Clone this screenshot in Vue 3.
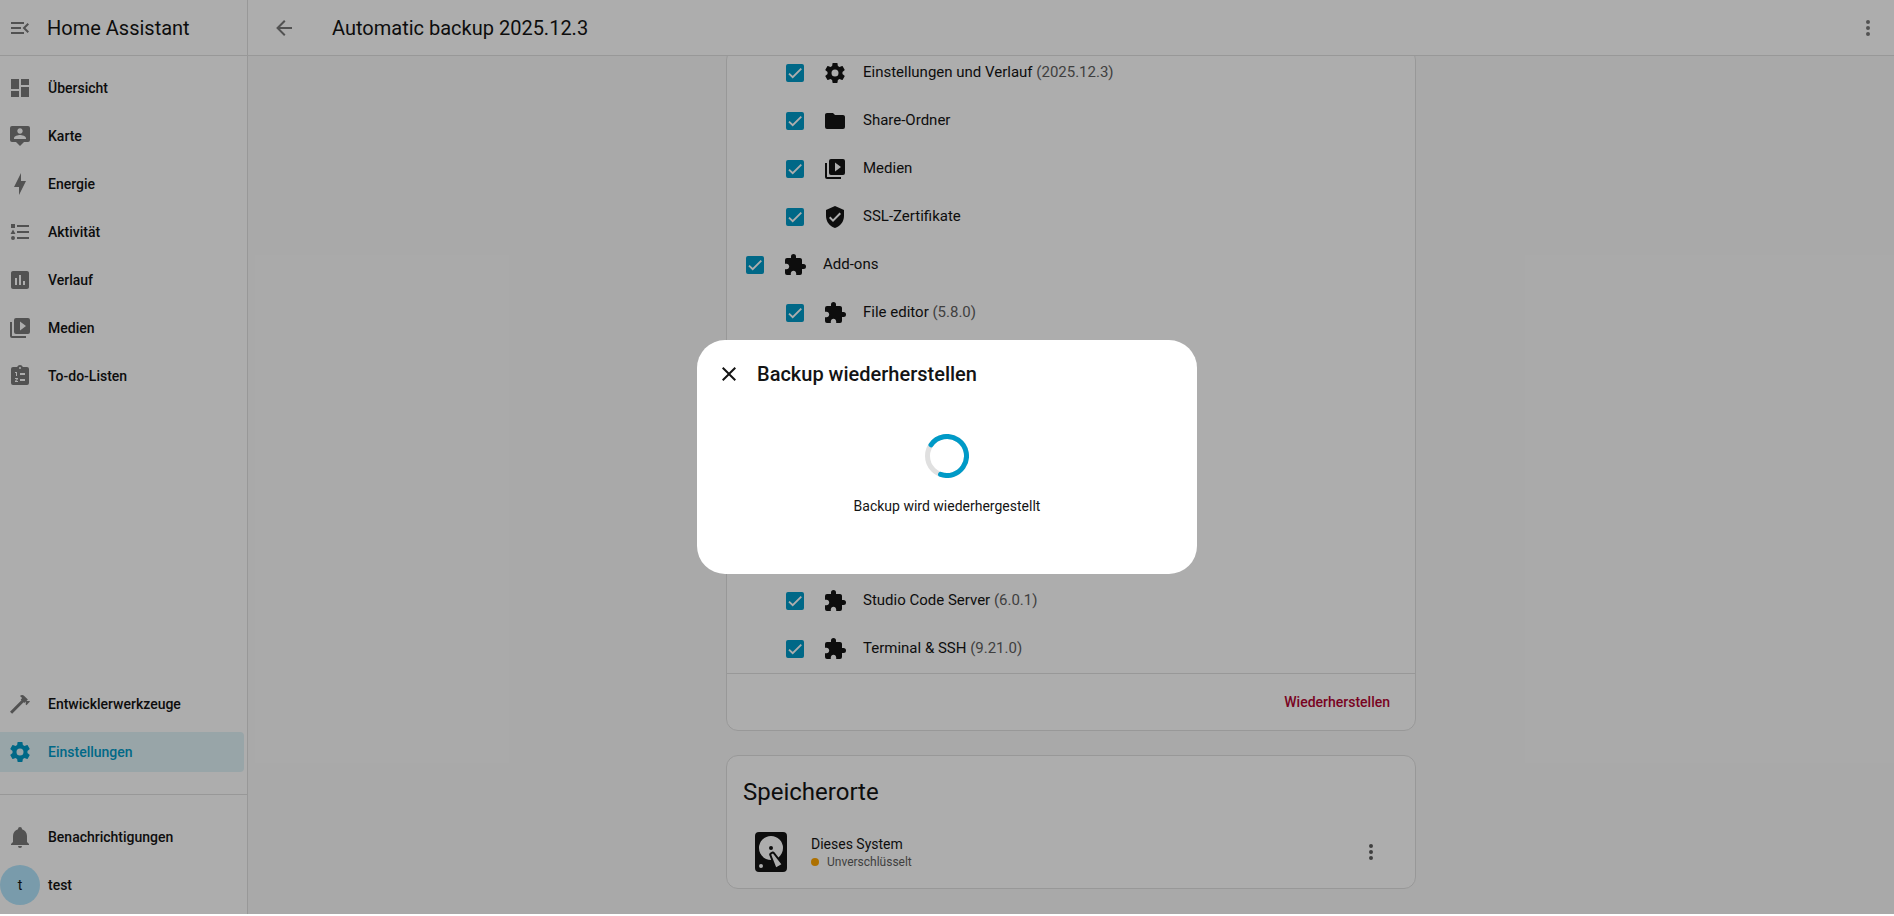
<script setup>
import { ref } from 'vue'

const icons = {
  menuOpen: 'M21,15.61L19.59,17L14.58,12L19.59,7L21,8.39L17.44,12L21,15.61M3,6H16V8H3V6M3,13V11H13V13H3M3,18V16H16V18H3Z',
  arrowLeft: 'M20,11V13H8L13.5,18.5L12.08,19.92L4.16,12L12.08,4.08L13.5,5.5L8,11H20Z',
  dots: 'M12,16A2,2 0 0,1 14,18A2,2 0 0,1 12,20A2,2 0 0,1 10,18A2,2 0 0,1 12,16M12,10A2,2 0 0,1 14,12A2,2 0 0,1 12,14A2,2 0 0,1 10,12A2,2 0 0,1 12,10M12,4A2,2 0 0,1 14,6A2,2 0 0,1 12,8A2,2 0 0,1 10,6A2,2 0 0,1 12,4Z',
  close: 'M19,6.41L17.59,5L12,10.59L6.41,5L5,6.41L10.59,12L5,17.59L6.41,19L12,13.41L17.59,19L19,17.59L13.41,12L19,6.41Z',
  dashboard: 'M13,3V9H21V3M13,21H21V11H13M3,21H11V15H3M3,13H11V3H3V13Z',
  map: 'M20,2H4A2,2 0 0,0 2,4V16A2,2 0 0,0 4,18H8L12,22L16,18H20A2,2 0 0,0 22,16V4A2,2 0 0,0 20,2M12,4.3C13.5,4.3 14.7,5.5 14.7,7C14.7,8.5 13.5,9.7 12,9.7C10.5,9.7 9.3,8.5 9.3,7C9.3,5.5 10.5,4.3 12,4.3M18,15H6V14.1C6,12.1 10,11 12,11C14,11 18,12.1 18,14.1V15Z',
  bolt: 'M11 15H6L13 1V9H18L11 23V15Z',
  activity: 'M5,9.5L7.5,14H2.5L5,9.5M3,4H7V8H3V4M5,20A2,2 0 0,0 7,18A2,2 0 0,0 5,16A2,2 0 0,0 3,18A2,2 0 0,0 5,20M9,5V7H21V5H9M9,19H21V17H9V19M9,13H21V11H9V13Z',
  chart: 'M9 17H7V10H9V17M13 17H11V7H13V17M17 17H15V13H17V17M19 3H5C3.9 3 3 3.9 3 5V19C3 20.1 3.9 21 5 21H19C20.1 21 21 20.1 21 19V5C21 3.9 20.1 3 19 3Z',
  media: 'M4,6H2V20A2,2 0 0,0 4,22H18V20H4V6M20,2H8A2,2 0 0,0 6,4V16A2,2 0 0,0 8,18H20A2,2 0 0,0 22,16V4A2,2 0 0,0 20,2M12,14.5V5.5L18,10L12,14.5Z',
  todo: 'M19 3H14.82C14.4 1.84 13.3 1 12 1S9.6 1.84 9.18 3H5A2 2 0 0 0 3 5V19A2 2 0 0 0 5 21H19A2 2 0 0 0 21 19V5A2 2 0 0 0 19 3M12 3A1 1 0 1 1 12 5A1 1 0 0 1 12 3M7 8H9V12H8V9H7V8M7 14H10V15.1L8.2 17H10V18H7V16.9L8.9 15H7V14M12 9H17V11H12V9M12 15H17V17H12V15Z',
  hammer: 'M2,19.63L13.43,8.2L12.72,7.5L14.14,6.07L12,3.89C13.2,2.7 15.09,2.7 16.27,3.89L19.87,7.5L18.45,8.91H21.29L22,9.62L18.45,13.21L17.74,12.5V9.62L16.27,11.04L15.56,10.33L4.13,21.76L2,19.63Z',
  cog: 'M12,15.5A3.5,3.5 0 0,1 8.5,12A3.5,3.5 0 0,1 12,8.5A3.5,3.5 0 0,1 15.5,12A3.5,3.5 0 0,1 12,15.5M19.43,12.97C19.47,12.65 19.5,12.33 19.5,12C19.5,11.67 19.47,11.34 19.43,11L21.54,9.37C21.73,9.22 21.78,8.95 21.66,8.73L19.66,5.27C19.54,5.05 19.27,4.96 19.05,5.05L16.56,6.05C16.04,5.66 15.5,5.32 14.87,5.07L14.5,2.42C14.46,2.18 14.25,2 14,2H10C9.75,2 9.54,2.18 9.5,2.42L9.13,5.07C8.5,5.32 7.96,5.66 7.44,6.05L4.95,5.05C4.73,4.96 4.46,5.05 4.34,5.27L2.34,8.73C2.21,8.95 2.27,9.22 2.46,9.37L4.57,11C4.53,11.34 4.5,11.67 4.5,12C4.5,12.33 4.53,12.65 4.57,12.97L2.46,14.63C2.27,14.78 2.21,15.05 2.34,15.27L4.34,18.73C4.46,18.95 4.73,19.03 4.95,18.95L7.44,17.94C7.96,18.34 8.5,18.68 9.13,18.93L9.5,21.58C9.54,21.82 9.75,22 10,22H14C14.25,22 14.46,21.82 14.5,21.58L14.87,18.93C15.5,18.67 16.04,18.34 16.56,17.94L19.05,18.95C19.27,19.03 19.54,18.95 19.66,18.73L21.66,15.27C21.78,15.05 21.73,14.78 21.54,14.63L19.43,12.97Z',
  bell: 'M21,19V20H3V19L5,17V11C5,7.9 7.03,5.17 10,4.29C10,4.19 10,4.1 10,4A2,2 0 0,1 12,2A2,2 0 0,1 14,4C14,4.1 14,4.19 14,4.29C16.97,5.17 19,7.9 19,11V17L21,19M14,21A2,2 0 0,1 12,23A2,2 0 0,1 10,21',
  folder: 'M10,4H4C2.89,4 2,4.89 2,6V18A2,2 0 0,0 4,20H20A2,2 0 0,0 22,18V8C22,6.89 21.1,6 20,6H12L10,4Z',
  shield: 'M10,17L6,13L7.41,11.59L10,14.17L16.59,7.58L18,9M12,1L3,5V11C3,16.55 6.84,21.74 12,23C17.16,21.74 21,16.55 21,11V5L12,1Z',
  puzzle: 'M20.5,11H19V7C19,5.89 18.1,5 17,5H13V3.5A2.5,2.5 0 0,0 10.5,1A2.5,2.5 0 0,0 8,3.5V5H4A2,2 0 0,0 2,7V10.8H3.5C5,10.8 6.2,12 6.2,13.5C6.2,15 5,16.2 3.5,16.2H2V20A2,2 0 0,0 4,22H7.8V20.5C7.8,19 9,17.8 10.5,17.8C12,17.8 13.2,19 13.2,20.5V22H17A2,2 0 0,0 19,20V16H20.5A2.5,2.5 0 0,0 23,13.5A2.5,2.5 0 0,0 20.5,11Z',
  disk: 'M6,2H18A2,2 0 0,1 20,4V20A2,2 0 0,1 18,22H6A2,2 0 0,1 4,20V4A2,2 0 0,1 6,2M12,4A6,6 0 0,0 6,10C6,13.31 8.69,16 12.1,16L11.22,13.77C10.95,13.29 11.11,12.68 11.59,12.4L12.45,11.9C12.93,11.63 13.54,11.79 13.82,12.27L15.74,14.69C17.12,13.59 18,11.9 18,10A6,6 0 0,0 12,4M12,9A1,1 0 0,1 13,10A1,1 0 0,1 12,11A1,1 0 0,1 11,10A1,1 0 0,1 12,9M7,18A1,1 0 0,0 6,19A1,1 0 0,0 7,20A1,1 0 0,0 8,19A1,1 0 0,0 7,18M12.09,13.27L14.58,19.58L17.17,18.08L12.95,12.77L12.09,13.27Z',
}

const mainNav = [
  { icon: 'dashboard', label: 'Übersicht' },
  { icon: 'map', label: 'Karte' },
  { icon: 'bolt', label: 'Energie' },
  { icon: 'activity', label: 'Aktivität' },
  { icon: 'chart', label: 'Verlauf' },
  { icon: 'media', label: 'Medien' },
  { icon: 'todo', label: 'To-do-Listen' },
]
const toolNav = [
  { icon: 'hammer', label: 'Entwicklerwerkzeuge' },
  { icon: 'cog', label: 'Einstellungen', active: true },
]

const upperItems = ref([
  { icon: 'cog', label: 'Einstellungen und Verlauf', version: '(2025.12.3)', child: true, checked: true },
  { icon: 'folder', label: 'Share-Ordner', child: true, checked: true },
  { icon: 'media', label: 'Medien', child: true, checked: true },
  { icon: 'shield', label: 'SSL-Zertifikate', child: true, checked: true },
  { icon: 'puzzle', label: 'Add-ons', child: false, checked: true },
  { icon: 'puzzle', label: 'File editor', version: '(5.8.0)', child: true, checked: true },
])
const lowerItems = ref([
  { icon: 'puzzle', label: 'Studio Code Server', version: '(6.0.1)', child: true, checked: true },
  { icon: 'puzzle', label: 'Terminal & SSH', version: '(9.21.0)', child: true, checked: true },
])
const groups = [
  { name: 'upper', items: upperItems.value },
  { name: 'lower', items: lowerItems.value },
]
</script>

<template>
  <div class="app">
    <aside class="sidebar">
      <div class="brand">
        <button class="icon-button" type="button" aria-label="Seitenleiste umschalten">
          <svg class="icon" viewBox="0 0 24 24"><path :d="icons.menuOpen" /></svg>
        </button>
        <span class="brand-name">Home Assistant</span>
      </div>
      <nav class="nav">
        <a v-for="item in mainNav" :key="item.label" class="nav-item" href="#">
          <svg class="icon" viewBox="0 0 24 24"><path :d="icons[item.icon]" /></svg>
          <span>{{ item.label }}</span>
        </a>
        <div class="nav-space"></div>
        <a v-for="item in toolNav" :key="item.label" class="nav-item" :class="{ active: item.active }" href="#">
          <svg class="icon" viewBox="0 0 24 24"><path :d="icons[item.icon]" /></svg>
          <span>{{ item.label }}</span>
        </a>
      </nav>
      <div class="account">
        <a class="nav-item" href="#">
          <svg class="icon" viewBox="0 0 24 24"><path :d="icons.bell" /></svg>
          <span>Benachrichtigungen</span>
        </a>
        <a class="nav-item user" href="#">
          <span class="avatar">t</span>
          <span>test</span>
        </a>
      </div>
    </aside>

    <main class="page">
      <header class="toolbar">
        <button class="icon-button" type="button" aria-label="Zurück">
          <svg class="icon" viewBox="0 0 24 24"><path :d="icons.arrowLeft" /></svg>
        </button>
        <h1 class="page-title">Automatic backup 2025.12.3</h1>
        <button class="icon-button" type="button" aria-label="Menü">
          <svg class="icon" viewBox="0 0 24 24"><path :d="icons.dots" /></svg>
        </button>
      </header>

      <div class="content">
        <section class="card data-card">
          <div v-for="group in groups" :key="group.name" class="group">
            <label v-for="item in group.items" :key="item.label" class="row" :class="{ child: item.child }">
              <span class="check">
                <input v-model="item.checked" type="checkbox" />
                <svg v-if="item.checked" class="mark" viewBox="0 0 24 24">
                  <path d="M1.73,12.91 8.1,19.28 22.79,4.59" />
                </svg>
              </span>
              <span class="row-icon">
                <svg class="icon" viewBox="0 0 24 24"><path :d="icons[item.icon]" /></svg>
              </span>
              <span class="row-label">{{ item.label }} <span v-if="item.version" class="version">{{ item.version }}</span></span>
            </label>
          </div>
          <div class="actions">
            <button class="restore" type="button">Wiederherstellen</button>
          </div>
        </section>

        <section class="card">
          <h2 class="card-title">Speicherorte</h2>
          <div class="location">
            <svg class="disk" viewBox="0 0 24 24"><path :d="icons.disk" /></svg>
            <div class="location-text">
              <span class="location-name">Dieses System</span>
              <span class="location-state"><span class="dot"></span>Unverschlüsselt</span>
            </div>
            <button class="icon-button dark" type="button" aria-label="Weitere Optionen">
              <svg class="icon" viewBox="0 0 24 24"><path :d="icons.dots" /></svg>
            </button>
          </div>
        </section>
      </div>
    </main>

    <div class="scrim">
      <div class="dialog" role="dialog" aria-modal="true" aria-labelledby="dialog-title">
        <header class="dialog-header">
          <button class="icon-button dark" type="button" aria-label="Schließen">
            <svg class="icon" viewBox="0 0 24 24"><path :d="icons.close" /></svg>
          </button>
          <h2 id="dialog-title" class="dialog-title">Backup wiederherstellen</h2>
        </header>
        <div class="dialog-body">
          <svg class="spinner" viewBox="0 0 44 44">
            <circle class="track" cx="22" cy="22" r="19.5" />
            <circle class="arc" cx="22" cy="22" r="19.5" pathLength="360" transform="rotate(-145 22 22)" />
          </svg>
          <p class="status">Backup wird wiederhergestellt</p>
        </div>
      </div>
    </div>
  </div>
</template>

<style>
body {
  background: #fff;
}
</style>

<style scoped>
.app {
  position: relative;
  display: flex;
  box-sizing: border-box;
  height: calc(100vh - 2px);
  overflow: hidden;
  background: #fafafa;
  color: #141414;
  font-family: Roboto, "Liberation Sans", sans-serif;
  font-size: 14px;
  line-height: 20px;
}
h1, h2, p {
  margin: 0;
  font-weight: 400;
}
button {
  border: 0;
  background: none;
  font: inherit;
  cursor: pointer;
}
.icon {
  display: block;
  flex: none;
  width: 24px;
  height: 24px;
  fill: currentColor;
  fill-rule: evenodd;
}
.icon-button {
  display: grid;
  place-items: center;
  flex: none;
  width: 48px;
  height: 48px;
  padding: 0;
  color: #7a7a7a;
}
.icon-button.dark {
  color: #5e5e5e;
}

/* Sidebar */
.sidebar {
  display: flex;
  flex-direction: column;
  flex: none;
  box-sizing: border-box;
  width: 248px;
  border-right: 1px solid #e0e0e0;
  background: #fff;
}
.brand {
  display: flex;
  align-items: center;
  box-sizing: border-box;
  height: 56px;
  border-bottom: 1px solid #e0e0e0;
}
.brand .icon-button {
  width: 40px;
}
.brand-name {
  margin-left: 7px;
  font-size: 20px;
}
.nav {
  display: flex;
  flex-direction: column;
  flex: 1;
  gap: 8px;
  padding: 12px 3px 22px 0;
}
.nav-space {
  flex: 1;
}
.nav-item {
  display: flex;
  align-items: center;
  gap: 16px;
  box-sizing: border-box;
  height: 40px;
  padding-left: 8px;
  border-radius: 0 4px 4px 0;
  color: #141414;
  font-weight: 500;
  text-decoration: none;
}
.nav-item .icon {
  color: #7a7a7a;
}
.nav-item.active {
  background: rgba(0, 154, 199, 0.12);
  color: #009ac7;
}
.nav-item.active .icon {
  color: #009ac7;
}
.account {
  display: flex;
  flex-direction: column;
  gap: 8px;
  padding: 22px 3px 9px 0;
  border-top: 1px solid #e0e0e0;
}
.nav-item.user {
  gap: 8px;
  padding-left: 0;
}
.avatar {
  display: grid;
  place-items: center;
  width: 40px;
  height: 40px;
  border-radius: 50%;
  background: #b3e5fc;
  font-weight: 400;
}

/* Page */
.page {
  display: flex;
  flex-direction: column;
  flex: 1;
  min-width: 0;
}
.toolbar {
  display: flex;
  align-items: center;
  flex: none;
  box-sizing: border-box;
  height: 56px;
  padding: 0 2px 0 12px;
  border-bottom: 1px solid #e0e0e0;
  background: #fff;
}
.page-title {
  flex: 1;
  padding-left: 24px;
  font-size: 20px;
}
.content {
  display: flex;
  flex-direction: column;
  flex: 1;
  gap: 24px;
  box-sizing: border-box;
  width: 100%;
  max-width: 690px;
  margin: 0 auto;
  overflow: hidden;
}
.card {
  flex: none;
  border: 1px solid #e0e0e0;
  border-radius: 12px;
  background: #fff;
}
.data-card {
  margin-top: -8px;
}
.group + .group {
  padding-top: 240px;
}
.row {
  display: flex;
  align-items: center;
  height: 48px;
  padding-left: 8px;
}
.row.child {
  padding-left: 48px;
}
.check,
.row-icon {
  display: grid;
  place-items: center;
  flex: none;
  width: 40px;
}
.check input {
  grid-area: 1 / 1;
  appearance: none;
  width: 18px;
  height: 18px;
  margin: 0;
  border: 2px solid #009ac7;
  border-radius: 2px;
}
.check input:checked {
  background: #009ac7;
}
.mark {
  grid-area: 1 / 1;
  width: 14px;
  height: 14px;
  fill: none;
  stroke: #fff;
  stroke-width: 3.12;
  pointer-events: none;
}
.row-label {
  padding: 0 0 2px 8px;
  font-size: 15px;
}
.version {
  color: #5e5e5e;
}
.actions {
  display: flex;
  align-items: center;
  justify-content: flex-end;
  height: 56px;
  padding: 0 9px;
  border-top: 1px solid #e0e0e0;
}
.restore {
  height: 40px;
  padding: 0 16px;
  color: #b30532;
  font-weight: 500;
}
.card-title {
  padding: 20px 16px 0;
  font-size: 24px;
  line-height: 32px;
}
.location {
  display: flex;
  align-items: center;
  height: 72px;
  padding: 8px 20px 0;
}
.disk {
  flex: none;
  width: 48px;
  height: 48px;
  fill: currentColor;
  fill-rule: evenodd;
}
.location-text {
  display: flex;
  flex-direction: column;
  flex: 1;
  padding-left: 16px;
}
.location-state {
  display: flex;
  align-items: center;
  gap: 8px;
  color: #5e5e5e;
  font-size: 12px;
  line-height: 16px;
}
.dot {
  width: 8px;
  height: 8px;
  border-radius: 50%;
  background: #ffa600;
}

/* Dialog */
.scrim {
  position: absolute;
  inset: 0;
  display: grid;
  place-items: center;
  background: rgba(0, 0, 0, 0.32);
}
.dialog {
  width: 500px;
  max-width: 90%;
  border-radius: 28px;
  background: #fff;
}
.dialog-header {
  display: flex;
  align-items: center;
  padding: 10px 8px;
}
.dialog-header .icon-button {
  color: #141414;
}
.dialog-title {
  padding-left: 4px;
  font-size: 20px;
  font-weight: 500;
}
.dialog-body {
  display: flex;
  flex-direction: column;
  align-items: center;
  gap: 18px;
  padding: 26px 24px 58px;
}
.spinner {
  width: 44px;
  height: 44px;
  fill: none;
  stroke-width: 5;
}
.track {
  stroke: #e0e0e0;
}
.arc {
  stroke: #009ac7;
  stroke-linecap: round;
  stroke-dasharray: 254 360;
}
</style>
